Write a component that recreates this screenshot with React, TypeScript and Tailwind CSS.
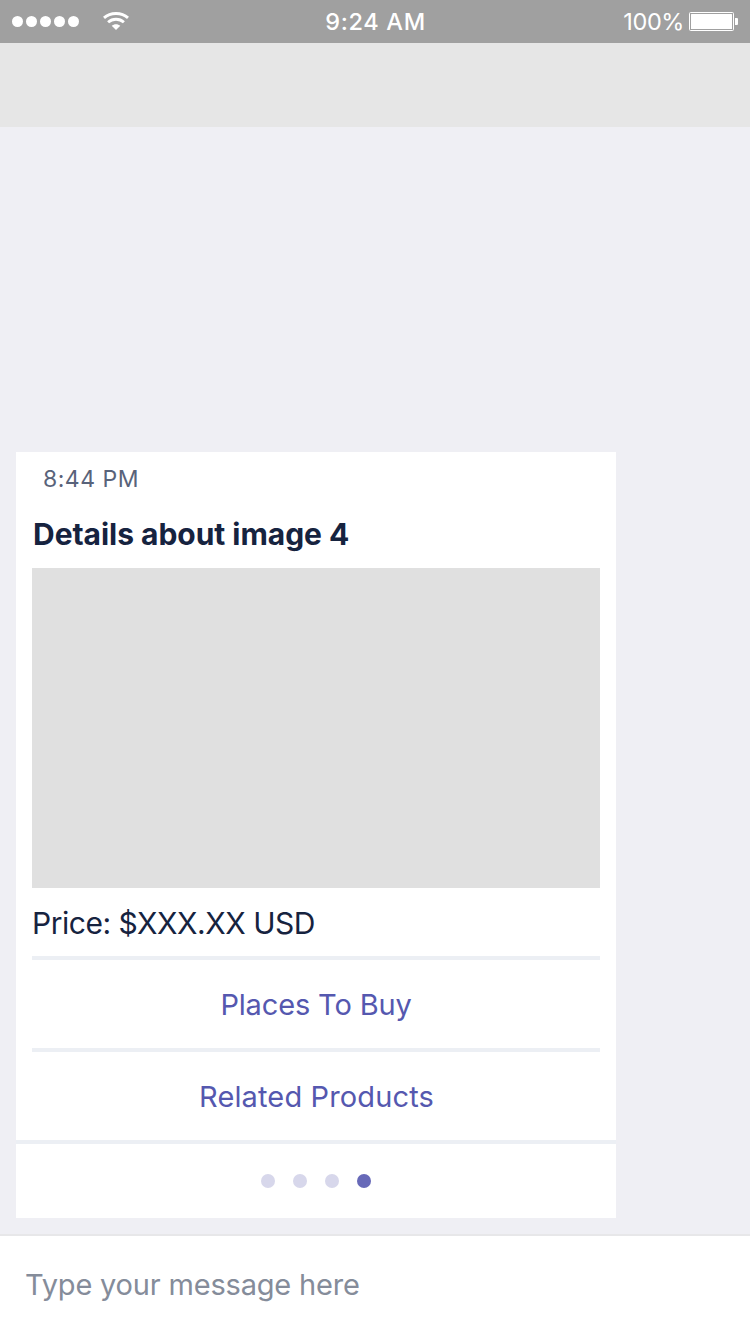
import React from "react";

const signalDots = [0, 1, 2, 3, 4];
const pageCount = 4;
const activePage = 3;
const actions = [
  { label: "Places To Buy", tracking: "tracking-[-0.15px]" },
  { label: "Related Products", tracking: "tracking-[0.13px] pl-px" },
];

function StatusBar() {
  return (
    <header className="grid h-[43px] shrink-0 grid-cols-3 items-center bg-[#a0a0a0] text-white">
      <div className="flex items-center pl-3">
        <div className="flex gap-[3px]">
          {signalDots.map((d) => (
            <span key={d} className="size-[11px] rounded-full bg-white" />
          ))}
        </div>
        <svg className="mb-px ml-6 h-[18px] w-[26px]" viewBox="0 0 26 18" fill="none" stroke="white">
          <path d="M1 5.900C7.500 0 18.500 0 25 5.900" strokeWidth="2.9" />
          <path d="M5.100 10.200C9.500 6.200 16.500 6.200 20.900 10.200" strokeWidth="2.9" />
          <path d="M8.700 13.800C11 11.600 15 11.600 17.300 13.800L13 18Z" fill="white" stroke="none" />
        </svg>
      </div>
      <div className="pl-px text-center text-[23.5px] font-medium leading-[23px] tracking-[0.7px]">9:24 AM</div>
      <div className="flex items-center justify-end pr-3">
        <span className="text-[23.5px] leading-[23px] tracking-[-0.4px]">100%</span>
        <svg className="ml-[5px] h-[19px] w-[49px]" viewBox="0 0 49 19">
          <rect x="0.5" y="0.5" width="44" height="18" rx="1" fill="none" stroke="white" />
          <rect x="2" y="2" width="41" height="15" rx="0.5" fill="white" />
          <path d="M46 6h2q1 0 1 1v5q0 1-1 1h-2Z" fill="white" />
        </svg>
      </div>
    </header>
  );
}

function ProductCard() {
  return (
    <article className="flex h-[766px] w-[600px] flex-col bg-white text-[#16233f]">
      <time className="h-[62px] pl-[27px] pt-3 text-[23px] leading-[30px] tracking-[0.5px] text-[#59637a]">8:44 PM</time>
      <h2 className="h-[54px] pl-[17px] text-[30px] font-bold leading-10 tracking-[-0.03px]">Details about image 4</h2>
      <div className="mx-4 h-80 shrink-0 bg-[#e0e0e0]" />
      <p className="h-[68px] pl-4 pt-3.5 text-[30px] leading-[42px] tracking-[-0.47px]">Price: $XXX.XX USD</p>
      {actions.map(({ label, tracking }) => (
        <button key={label} className="mx-4 h-[92px] border-t-4 border-[#eceff4] pt-px text-center text-[29px] leading-[88px] text-[#5558af]">
          <span className={tracking}>{label}</span>
        </button>
      ))}
      <div className="flex flex-1 items-center justify-center gap-[18px] border-t-4 border-[#eceff4]">
        {Array.from({ length: pageCount }, (_, i) => (
          <span key={i} className={i === activePage ? "size-3.5 rounded-full bg-[#6769b8]" : "size-3.5 rounded-full bg-[#d7d7eb]"} />
        ))}
      </div>
    </article>
  );
}

export default function App() {
  return (
    <div className="flex h-[1334px] w-[750px] flex-col overflow-hidden bg-[#efeff4] font-['Inter',sans-serif]">
      <StatusBar />
      <div className="h-[84px] shrink-0 bg-[#e6e6e6]" />
      <main className="flex flex-1 flex-col justify-end px-4 pb-4">
        <ProductCard />
      </main>
      <footer className="h-[100px] shrink-0 border-t-2 border-[#e7e7e9] bg-white pl-[25px] text-[29px] leading-[98px] tracking-[-0.19px] text-[#858c9a]">
        Type your message here
      </footer>
    </div>
  );
}
